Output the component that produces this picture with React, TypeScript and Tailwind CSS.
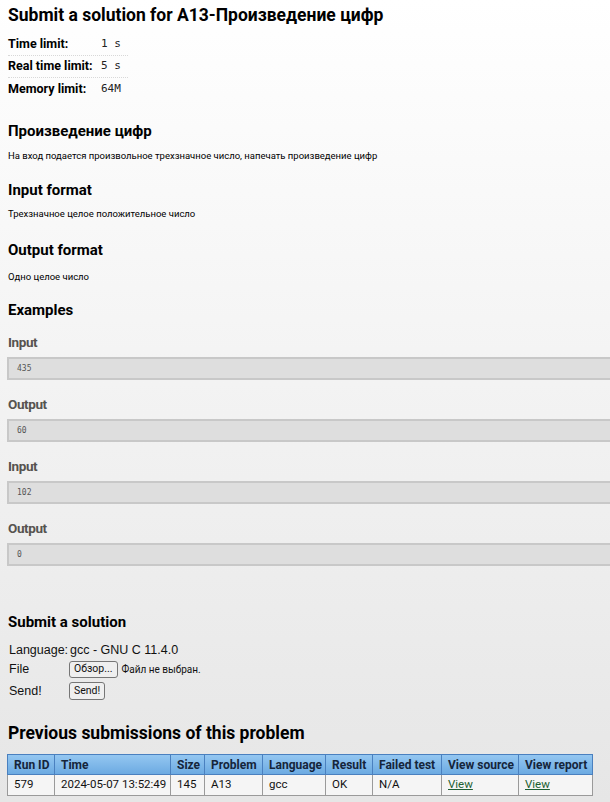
import React from 'react';

const limits = [
    { label: 'Time limit:', value: '1 s' },
    { label: 'Real time limit:', value: '5 s' },
    { label: 'Memory limit:', value: '64M' },
];

const examples = [
    { title: 'Input', value: '435' },
    { title: 'Output', value: '60' },
    { title: 'Input', value: '102' },
    { title: 'Output', value: '0' },
];

const columns = [
    { name: 'Run ID', w: 'w-[47px]' },
    { name: 'Time', w: 'w-[116px]' },
    { name: 'Size', w: 'w-[34px]' },
    { name: 'Problem', w: 'w-[58px]' },
    { name: 'Language', w: 'w-[63px]' },
    { name: 'Result', w: 'w-[47px]' },
    { name: 'Failed test', w: 'w-[69px]' },
    { name: 'View source', w: 'w-[77px]' },
    { name: 'View report', w: 'w-[74px]' },
];

const row = ['579', '2024-05-07 13:52:49', '145', 'A13', 'gcc', 'OK', 'N/A'];

export default function App() {
    return (
        <div className="min-h-[802px] bg-gradient-to-b from-white to-[#e6e6e6] font-['Roboto',sans-serif] text-black overflow-hidden">
            <div className="pl-2">
                {/* Header */}
                <h1 className="h-[30px] leading-[30px] text-[17.5px] font-bold">
                    Submit a solution for A13-Произведение цифр
                </h1>
                <div className="mt-1 w-[120px]">
                    {limits.map((l, i) => (
                        <div
                            key={l.label}
                            className={
                                'flex h-[22px] items-center ' +
                                (i < limits.length - 1 ? 'border-b border-dotted border-[#d8d8d8]' : '')
                            }
                        >
                            <span className="w-[93px] shrink-0 text-[12.5px] font-bold">{l.label}</span>
                            <span className="font-['DejaVu_Sans_Mono',monospace] text-[11px] text-[#222]">{l.value}</span>
                        </div>
                    ))}
                </div>

                {/* Statement */}
                <h3 className="mt-[21px] h-[20px] leading-[20px] text-[15px] font-bold">Произведение цифр</h3>
                <p className="mt-[7px] h-[16px] leading-[16px] text-[9.5px]">
                    На вход подается произвольное трехзначное число, напечать произведение цифр
                </p>
                <h3 className="mt-[16px] h-[20px] leading-[20px] text-[15px] font-bold">Input format</h3>
                <p className="mt-[6px] h-[16px] leading-[16px] text-[9.5px]">Трехзначное целое положительное число</p>
                <h3 className="mt-[18px] h-[20px] leading-[20px] text-[15px] font-bold">Output format</h3>
                <p className="mt-[9px] h-[16px] leading-[16px] text-[9.5px]">Одно целое число</p>

                <h3 className="mt-[15px] h-[20px] leading-[20px] text-[15px] font-bold">Examples</h3>
            </div>

            <div className="pl-[7px]">
                {examples.map((e, i) => (
                    <div key={i} className={i === 0 ? 'mt-[13px]' : 'mt-[15px]'}>
                        <div className="pl-px h-[18px] leading-[18px] text-[13.5px] font-bold text-[#56534f] tracking-[-0.4px]">
                            {e.title}
                        </div>
                        <div className="mt-[6px] flex h-[23px] items-center border-y-2 border-l-2 border-[#c8c8c8] bg-[#dedede] pl-[8px] font-['DejaVu_Sans_Mono',monospace] text-[8px] text-[#555]">
                            {e.value}
                        </div>
                    </div>
                ))}
            </div>

            {/* Submit form */}
            <div className="pl-2">
                <h3 className="mt-[46px] h-[20px] leading-[20px] text-[15px] font-bold">Submit a solution</h3>
                <div className="mt-[9px] pl-px font-['Liberation_Sans',sans-serif] text-[12.5px] text-[#111]">
                    <div className="flex h-[18px] items-center">
                        <span className="w-[61px] shrink-0">Language:</span>
                        <span>gcc - GNU C 11.4.0</span>
                    </div>
                    <div className="mt-px flex h-[19px] items-center">
                        <span className="w-[60px] shrink-0">File</span>
                        <button className="h-[17px] rounded-[3px] border border-[#767676] bg-[#efefef] px-[4px] text-[10.5px] leading-none font-['Roboto',sans-serif]">
                            Обзор...
                        </button>
                        <span className="ml-[4px] text-[10px] font-['Roboto',sans-serif]">Файл не выбран.</span>
                    </div>
                    <div className="mt-[2px] flex h-[20px] items-center">
                        <span className="w-[60px] shrink-0">Send!</span>
                        <button className="h-[18px] rounded-[3px] border border-[#767676] bg-[#efefef] px-[4px] text-[10.5px] leading-none font-['Roboto',sans-serif]">
                            Send!
                        </button>
                    </div>
                </div>

                <h2 className="mt-[19px] h-[26px] leading-[26px] text-[17.5px] font-bold">Previous submissions of this problem</h2>
            </div>

            {/* Submissions table */}
            <div className="ml-[7px] mt-[8px]">
                <table className="w-[585px] table-fixed border-collapse">
                    <thead>
                        <tr className="bg-gradient-to-b from-[#94c7f1] to-[#6aa9e1]">
                            {columns.map((c) => (
                                <th
                                    key={c.name}
                                    className={
                                        c.w +
                                        ' h-[20px] border border-[#4a80bf] px-[6px] text-left text-[12px] font-bold text-[#15253b] whitespace-nowrap overflow-hidden'
                                    }
                                >
                                    {c.name}
                                </th>
                            ))}
                        </tr>
                    </thead>
                    <tbody>
                        <tr className="bg-[#f5f5f5] text-[11.5px]">
                            {row.map((v, i) => (
                                <td key={i} className="h-[21px] border border-[#9a9a9a] px-[6px] text-[#111] whitespace-nowrap">
                                    {v}
                                </td>
                            ))}
                            <td className="h-[21px] border border-[#9a9a9a] px-[6px]">
                                <a href="#" className="text-[#1e5f33] underline">View</a>
                            </td>
                            <td className="h-[21px] border border-[#9a9a9a] px-[6px]">
                                <a href="#" className="text-[#1e5f33] underline">View</a>
                            </td>
                        </tr>
                    </tbody>
                </table>
            </div>
        </div>
    );
}
